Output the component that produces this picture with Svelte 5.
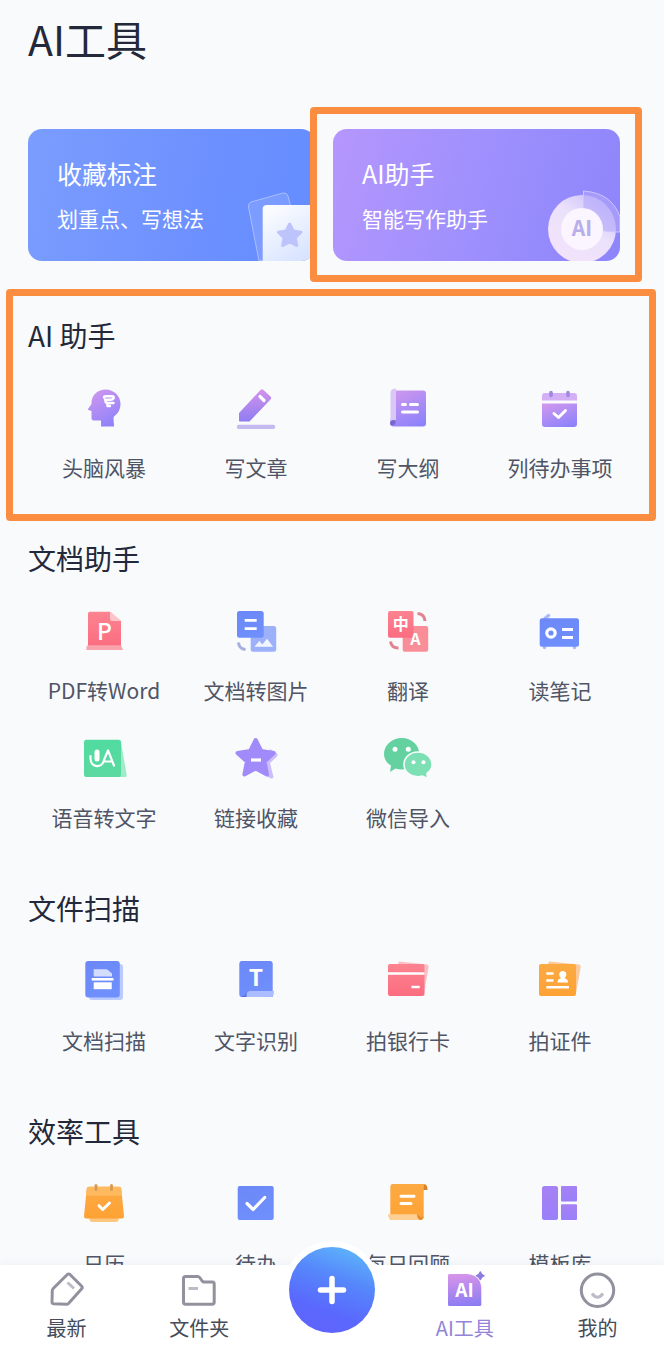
<script>
    let active = $state("ai");

    const sections = [
        {
            title: "AI 助手",
            marked: true,
            tools: [
                { icon: "brain", name: "头脑风暴" },
                { icon: "pencil", name: "写文章" },
                { icon: "outline", name: "写大纲" },
                { icon: "todo-list", name: "列待办事项" }
            ]
        },
        {
            title: "文档助手",
            tools: [
                { icon: "pdf", name: "PDF转Word" },
                { icon: "doc-image", name: "文档转图片" },
                { icon: "translate", name: "翻译" },
                { icon: "radio", name: "读笔记" },
                { icon: "voice", name: "语音转文字" },
                { icon: "star", name: "链接收藏" },
                { icon: "wechat", name: "微信导入" }
            ]
        },
        {
            title: "文件扫描",
            tools: [
                { icon: "scan", name: "文档扫描" },
                { icon: "ocr", name: "文字识别" },
                { icon: "bank-card", name: "拍银行卡" },
                { icon: "id-card", name: "拍证件" }
            ]
        },
        {
            title: "效率工具",
            tools: [
                { icon: "calendar", name: "日历" },
                { icon: "check", name: "待办" },
                { icon: "review", name: "每日回顾" },
                { icon: "template", name: "模板库" }
            ]
        }
    ];

    const tabs = [
        { id: "latest", name: "最新" },
        { id: "folder", name: "文件夹" },
        { id: "add", name: "新建" },
        { id: "ai", name: "AI工具" },
        { id: "me", name: "我的" }
    ];
</script>

{#snippet toolIcon(name)}
    <svg class="icon" viewBox="0 0 48 48" aria-hidden="true">
        {#if name == "brain"}
            <path fill="url(#violet)" d="M11.5 17C12 9.500 18 4.500 25.500 4.500C34 4.500 40.500 11 40.500 19C40.500 24.500 38 28.500 34 31.500L33.500 33L34 41.500H21V35.500H14Q11.500 35.500 11.500 33V26L8.500 25Q7.500 24.500 8.300 23.500L11.500 19Z" />
            <path fill="none" stroke="#fff" stroke-width="2.400" stroke-linecap="round" stroke-linejoin="round" d="M24 12.500Q24 11.300 26 11.300H32Q34.500 11.300 33.500 13.500Q32.500 15 29 14.700H25M33.500 18H28Q25.500 18 25.500 16M27.500 18.500V21H30" />
        {:else if name == "pencil"}
            <path fill="url(#pinkViolet)" d="M7 28L28.500 5Q30 3.500 31.500 5L38.500 11.500Q39.800 13 38.500 14.500L17.500 36.500H8Q7 36.500 7 35.500Z" />
            <path stroke="#fff" stroke-width="3.200" stroke-linecap="round" d="M28 11.500L32 15.500" />
            <rect x="5" y="39.700" width="38" height="4.200" rx="1.500" fill="#c5bbee" />
        {:else if name == "outline"}
            <path fill="url(#violet)" d="M12 5.500H39Q42 5.500 42 8.500V38.500Q42 41.500 39 41.500H9Q6 41 6 38Z" />
            <path fill="#d9c7f8" d="M6.500 7Q7 3.500 12 3.500V35Q7 34.500 6.500 38.500Z" />
            <path fill="#7868cc" d="M6 38Q6.500 34.500 10.500 35.200Q12 35.800 11.500 38Q10.500 40.500 8 40.500Q6 40 6 38Z" />
            <path stroke="#fff" stroke-width="3" stroke-linecap="round" d="M18.500 19.500H21.500M26.500 19.500H33.500M18.500 27H33.500" />
        {:else if name == "todo-list"}
            <path fill="#d3aff5" d="M6 15.500V11Q6 8 9 8H38Q41 8 41 11V15.500Z" />
            <path fill="url(#violet)" d="M6 18.500H41V39Q41 42 38 42H9Q6 42 6 39Z" />
            <path stroke="#a187e2" stroke-width="3.600" stroke-linecap="round" d="M15 7.500V10.500M32 7.500V10.500" />
            <path fill="none" stroke="#fff" stroke-width="3" stroke-linecap="round" stroke-linejoin="round" d="M18 28.500L22.500 32.500L29.500 25.500" />
        {:else if name == "pdf"}
            <path fill="url(#red)" d="M10 3.700H30L41 13V39H8V5.700Q8 3.700 10 3.700Z" />
            <path fill="#fdc4c9" d="M30 3.700L41 13H32Q30 13 30 11Z" />
            <path fill="#f9a4ac" d="M8 37.300H41L43 42H6.300Q6 38 8 37.300Z" />
            <text x="24.500" y="31.500" class="glyph medium" font-size="23">P</text>
        {:else if name == "doc-image"}
            <rect x="18.700" y="18" width="25.500" height="25.700" rx="2.500" fill="#9db0fa" />
            <rect x="5" y="3" width="26.700" height="26.700" rx="2.500" fill="url(#blue)" />
            <path stroke="#fff" stroke-width="2.800" d="M12.700 12.300H24.700M12.700 20.700H24.700" />
            <path fill="#f2f5ff" d="M22.500 38.700L27.300 33L30.300 36.500L35 30.700L41 38.700Z" />
            <path fill="none" stroke="#a5aede" stroke-width="3" d="M6.500 34.500Q7 41 13.500 41.500" />
        {:else if name == "translate"}
            <rect x="18.700" y="18" width="25.500" height="25.700" rx="2" fill="#fa8e98" />
            <rect x="4" y="3" width="25.500" height="26.700" rx="2" fill="url(#red)" />
            <text x="16.700" y="22" class="glyph" font-size="16">中</text>
            <text x="31.500" y="37" class="glyph" font-size="16">A</text>
            <path fill="none" stroke="#e18391" stroke-width="3" d="M33.500 5.500Q40.500 6 41 13M6.500 33.500Q7.500 40 14.500 40" />
        {:else if name == "radio"}
            <path stroke="#a9bbfb" stroke-width="3.500" stroke-linecap="round" d="M9 10.500L12.500 7.500M8.500 38V39.500M38.500 38V39.500" />
            <rect x="3.700" y="10.300" width="39.300" height="28.400" rx="2.500" fill="url(#blue)" />
            <circle cx="15" cy="25" r="4.200" fill="none" stroke="#fff" stroke-width="3.200" />
            <path stroke="#fff" stroke-width="2.800" d="M26 21.500H37M26 29.500H37" />
        {:else if name == "voice"}
            <path fill="#9decc5" d="M38 6L41 7L46.700 40Q47 42 45 42H38Z" />
            <rect x="4" y="4.700" width="37" height="37.300" rx="2.500" fill="url(#green)" />
            <rect x="14.500" y="14.500" width="5" height="12" rx="2.500" fill="#fff" />
            <path fill="none" stroke="#fff" stroke-width="2.200" stroke-linecap="round" stroke-linejoin="round" d="M10.500 21V23C10.500 33.500 22.500 33.500 24 25L28 15.500L34 30.500M24.500 26.500H31.500" />
        {:else if name == "star"}
            <path fill="#cdbefb" d="M38 14L45 18.500Q46.200 20 45 21.500L38 28L41.500 42Q41 44 39 43.500L28 38Z" />
            <path fill="#a18bfa" stroke="#a18bfa" stroke-width="4" stroke-linejoin="round" d="M23.700 5L29.200 16L41.700 18L32.500 26.500L35 39.500L23.700 33.500L12.400 39.500L14.900 26.500L5.500 18L18.200 16Z" />
            <path stroke="#fff" stroke-width="3.200" d="M19 25H29" />
        {:else if name == "wechat"}
            <path fill="#63d2a0" d="M17.700 3C27.500 3 35.300 10 35.300 19C35.300 28 27.500 34.500 17.700 34.500Q14.500 34.500 11.500 33.500L6 37L7 30.500C2.500 28 0 24 0 19C0 10 8 3 17.700 3Z" />
            <path fill="#7ce0b4" stroke="#f9fafc" stroke-width="1.600" d="M34 17C42 17 48 22.500 48 29.500Q48 35 43 38.500L43.500 43.500L38.500 41Q36.500 41.700 34 41.700C26 41.700 20 36.500 20 29.500C20 22.500 26 17 34 17Z" />
            <g fill="#fff">
                <circle cx="11" cy="14.300" r="2.500" />
                <circle cx="24.300" cy="14.300" r="2.500" />
                <circle cx="29.500" cy="27.300" r="2" />
                <circle cx="39.500" cy="27.300" r="2" />
            </g>
        {:else if name == "scan"}
            <rect x="9" y="6" width="34" height="36" rx="3" fill="#bccbff" />
            <rect x="5.300" y="3" width="34.500" height="36.500" rx="3" fill="url(#blue)" />
            <path fill="#d3deff" d="M13.700 11.300H27L32 15.500V18.500H13.700Z" />
            <path stroke="#fff" stroke-width="2.600" d="M11.700 21.300H33.500" />
            <path fill="#fff" d="M13.700 24.300H31.700V31.200H13.700Z" />
        {:else if name == "ocr"}
            <path fill="url(#blue)" d="M10 3H38Q40.700 3 40.700 6V39H10Q7.300 39 7.300 36V6Q7.300 3 10 3Z" />
            <path fill="#abbcff" d="M14 39Q14.500 33 18 33H42Q42 39 38.500 39Z" />
            <path fill="#5872e2" d="M8.500 38.500Q14 38 14.500 34.500V39H10Z" />
            <text x="24" y="28" class="glyph" font-size="23">T</text>
        {:else if name == "bank-card"}
            <path fill="#fbc0c7" d="M15 3.500L43 6.500Q45 7 44.700 9L40 35H36L14 6Z" />
            <rect x="4" y="6" width="36.500" height="32" rx="2" fill="url(#red)" />
            <path stroke="#fff" stroke-width="2.600" d="M4 15.500H40.500M27.500 29H35.700" />
        {:else if name == "id-card"}
            <path fill="#fcc99b" d="M13 3.500L43 6.500Q45 7 44.700 9L40 35H36L12 6Z" />
            <rect x="3" y="6" width="37" height="32" rx="2" fill="url(#orange)" />
            <path stroke="#fff" stroke-width="2.600" d="M10.300 15.500H17.500M10.300 22.500H17.500M10.300 29.300H33" />
            <circle cx="26.800" cy="16.500" r="3.500" fill="#fff" />
            <path fill="#fff" d="M25 18H28.600L29 20.500Q32 21 32 24.500H21.500Q21.500 21 24.600 20.500Z" />
        {:else if name == "calendar"}
            <path fill="#fec77f" d="M8 35H40L38 40Q37.500 41 36 41H12Q10.500 41 10 40Z" />
            <path fill="url(#orange)" d="M9 5.700H39Q41 5.700 41.300 8L44 35Q44 37.500 42 37.500H6Q4 37.500 4 35L6.700 8Q7 5.700 9 5.700Z" />
            <path fill="#ffb95e" d="M9 5.700H39Q41 5.700 41.300 8L42 14.700H6L6.700 8Q7 5.700 9 5.700Z" />
            <path stroke="#d99b50" stroke-width="3" stroke-linecap="round" d="M16 4.500V8.500M31.500 4.500V8.500" />
            <path fill="none" stroke="#fff" stroke-width="3" stroke-linecap="round" stroke-linejoin="round" d="M19 24.700L22.700 28.500L29.500 22" />
        {:else if name == "check"}
            <rect x="5.700" y="5" width="36" height="34" rx="2" fill="url(#blue)" />
            <path fill="none" stroke="#fff" stroke-width="3.200" stroke-linecap="round" stroke-linejoin="round" d="M15 22.500L21.200 28.500L32.700 16.500" />
        {:else if name == "review"}
            <path fill="#d9812f" d="M38 3H40Q43.500 3 43.500 9H38Z" />
            <path fill="url(#orange)" d="M9 3H41Q39.700 4 39.700 7V36Q39.700 39 36 39H6.300V6Q6.300 3 9 3Z" />
            <path fill="#fdcf94" d="M4 33.300H33Q33 38 36 39H7.500Q4 38 4 33.300Z" />
            <path fill="#e2882d" d="M33 33.500Q34 38 36.500 39Q39.500 38.500 39.500 35L38 37Z" />
            <path stroke="#fff" stroke-width="3" stroke-linecap="round" d="M17 15.200H30M17 22.500H27" />
        {:else if name == "template"}
            <g fill="url(#purple)">
                <rect x="6" y="5" width="16" height="34" rx="2.500" />
                <rect x="25" y="5" width="16" height="15.500" rx="1" />
                <rect x="25" y="23.300" width="16" height="15.700" rx="1" />
            </g>
        {/if}
    </svg>
{/snippet}

{#snippet tabIcon(id)}
    <svg class="tab-icon" viewBox="0 0 40 40" aria-hidden="true">
        {#if id == "latest"}
            <path class="line" d="M21.300 4.500Q22.700 3.500 24 4.500L35.700 16.200Q36.800 17.500 35.700 18.700L22.500 33.500Q21.700 34.300 20.500 34.300L7.500 33.700Q6 33.500 6 32L6.300 20.500Q6.300 19.300 7.200 18.500Z" />
            <path stroke="#bcbcc9" stroke-width="3" d="M21.500 12.500L28 18.500" />
        {:else if id == "folder"}
            <path class="line" d="M6.500 6.500H18.500Q20 6.500 20.700 7.500L23.200 11Q24 12 25 12H33.500Q35.200 12 35.200 14V32Q35.200 34.300 33 34.300H6.500Q4.500 34.300 4.500 32V8.500Q4.500 6.500 6.500 6.500Z" />
            <path stroke="#bcbcc9" stroke-width="3" d="M9.500 18.500H19" />
        {:else if id == "ai"}
            <path fill="url(#pinkViolet)" d="M4.500 4H22Q36.300 5.500 36.300 19V34.500Q36.300 36 34.800 36H4.500Q3 36 3 34.500V5.500Q3 4 4.500 4Z" />
            <path fill="#8d7be0" stroke="#8d7be0" stroke-width="1.500" stroke-linejoin="round" d="M35.300 2Q36 5 39 5.700Q36 6.500 35.300 9.500Q34.500 6.500 31.500 5.700Q34.500 5 35.300 2Z" />
            <text x="19.500" y="27" class="glyph" font-size="19">AI</text>
        {:else if id == "me"}
            <circle class="line" cx="19.500" cy="20.300" r="16.200" />
            <path fill="none" stroke="#bcbcc9" stroke-width="3" d="M14 23.500Q19.500 31 25 23.500" />
        {/if}
    </svg>
{/snippet}

<svg class="defs" aria-hidden="true">
    <defs>
        <linearGradient id="violet" x1="0.200" y1="0" x2="0.700" y2="1">
            <stop offset="0" stop-color="#ce97ee" />
            <stop offset="1" stop-color="#8e82fb" />
        </linearGradient>
        <linearGradient id="pinkViolet" x1="0.400" y1="0" x2="0.500" y2="1">
            <stop offset="0" stop-color="#d694ea" />
            <stop offset="1" stop-color="#8c7cf2" />
        </linearGradient>
        <linearGradient id="red" x1="0" y1="0" x2="0" y2="1">
            <stop offset="0" stop-color="#fc8390" />
            <stop offset="1" stop-color="#fb6d80" />
        </linearGradient>
        <linearGradient id="blue" x1="0" y1="0" x2="0.300" y2="1">
            <stop offset="0" stop-color="#6b88f6" />
            <stop offset="1" stop-color="#6f8ffd" />
        </linearGradient>
        <linearGradient id="green" x1="0" y1="0" x2="0" y2="1">
            <stop offset="0" stop-color="#50dba0" />
            <stop offset="1" stop-color="#5bd9a0" />
        </linearGradient>
        <linearGradient id="orange" x1="0" y1="0" x2="0" y2="1">
            <stop offset="0" stop-color="#fcaa43" />
            <stop offset="1" stop-color="#fea235" />
        </linearGradient>
        <linearGradient id="purple" x1="0" y1="0" x2="0" y2="1">
            <stop offset="0" stop-color="#a681f3" />
            <stop offset="1" stop-color="#9a7ffa" />
        </linearGradient>
        <linearGradient id="paper" x1="0" y1="0" x2="0.600" y2="1">
            <stop offset="0" stop-color="#ffffff" />
            <stop offset="1" stop-color="#d9e4ff" />
        </linearGradient>
        <linearGradient id="ring" x1="0.300" y1="1" x2="0.900" y2="0.200">
            <stop offset="0" stop-color="#f3e3fb" />
            <stop offset="0.600" stop-color="#ebe1fb" />
            <stop offset="1" stop-color="#cfc5fb" />
        </linearGradient>
    </defs>
</svg>

<div class="app">
    <main>
        <h1>AI工具</h1>

        <div class="cards">
            <a class="card notes" href="#notes">
                <strong>收藏标注</strong>
                <span>划重点、写想法</span>
                <svg class="art" viewBox="0 0 80 80" aria-hidden="true">
                    <path fill="#8fa9ff" fill-opacity="0.500" stroke="#a9beff" stroke-width="1" d="M16 21L48 12Q52 11.500 53 15L67 70L24 80L13.500 26Q13 22 16 21Z" />
                    <path fill="url(#paper)" d="M27.700 28Q27.700 24 32 24H80V80H27.700Z" />
                    <path fill="#bcc4fb" stroke="#bcc4fb" stroke-width="3" stroke-linejoin="round" d="M54.700 43L58.200 50L66 51.200L60.300 56.700L61.700 64.500L54.700 60.800L47.700 64.500L49.100 56.700L43.400 51.200L51.200 50Z" />
                </svg>
            </a>
            <a class="card assistant" href="#assistant">
                <strong>AI助手</strong>
                <span>智能写作助手</span>
                <svg class="art" viewBox="0 0 80 80" aria-hidden="true">
                    <circle cx="42" cy="48" r="34" fill="url(#ring)" />
                    <path fill="#b4a8fa" fill-opacity="0.600" stroke="#cdc4fd" stroke-width="1" d="M43.500 48V10Q72 12 80 36V51H76Z" />
                    <circle cx="42" cy="48" r="21" fill="#faf5fe" />
                    <text x="42" y="55" class="glyph soft" font-size="21">AI</text>
                </svg>
            </a>
        </div>

        {#each sections as section}
            <section class:marked={section.marked}>
                <h2>{section.title}</h2>
                <div class="tools">
                    {#each section.tools as tool}
                        <button class="tool" type="button">
                            {@render toolIcon(tool.icon)}
                            <span>{tool.name}</span>
                        </button>
                    {/each}
                </div>
            </section>
        {/each}
    </main>

    <nav>
        {#each tabs as tab}
            {#if tab.id == "add"}
                <div class="tab">
                    <button class="add" type="button" aria-label={tab.name}>
                        <svg viewBox="0 0 40 40" aria-hidden="true">
                            <path stroke="#fff" stroke-width="5.500" stroke-linecap="round" d="M20 8.500V31.500M8.500 20H31.500" />
                        </svg>
                    </button>
                </div>
            {:else}
                <a class="tab" class:active={active == tab.id} href="#{tab.id}" onclick={() => active = tab.id}>
                    {@render tabIcon(tab.id)}
                    <span>{tab.name}</span>
                </a>
            {/if}
        {/each}
    </nav>
</div>

<style>
    :global(body) {
        background: #f9fafc;
        font-family: "Noto Sans CJK SC", sans-serif;
    }
    .defs {
        position: absolute;
        width: 0;
        height: 0;
    }
    .app {
        display: flex;
        flex-direction: column;
        height: 100vh;
        color: #23283a;
    }
    main {
        flex: 1;
        min-height: 0;
        overflow-x: hidden;
        overflow-y: auto;
        scrollbar-width: none;
        box-sizing: border-box;
        padding: 10px 28px 28px;
    }
    h1 {
        margin: 0;
        font-size: 41px;
        line-height: 56px;
        font-weight: 400;
    }
    .cards {
        display: grid;
        grid-template-columns: 1fr 1fr;
        gap: 18px;
        margin: 63px 16px 0 0;
    }
    .card {
        position: relative;
        display: flex;
        flex-direction: column;
        gap: 12px;
        box-sizing: border-box;
        height: 132px;
        padding: 26px 29px;
        border-radius: 14px;
        color: #fff;
        text-decoration: none;
    }
    .card strong {
        font-size: 25px;
        line-height: 36px;
        font-weight: 400;
    }
    .card span {
        font-size: 21px;
        line-height: 30px;
    }
    .notes {
        background: linear-gradient(100deg, #7b9dfe, #6d90ff 60%, #648dff);
    }
    .assistant {
        background: linear-gradient(105deg, #b596fd, #9e90fd 50%, #8d85fb);
    }
    .art {
        position: absolute;
        right: 0;
        bottom: 0;
        width: 80px;
        height: 80px;
        border-bottom-right-radius: 14px;
    }

    /* orange call-out frames */
    .assistant::after,
    .marked::after {
        content: "";
        position: absolute;
        border: 7px solid #fb8d40;
        border-radius: 4px;
        pointer-events: none;
    }
    .assistant::after {
        inset: -22px -22px -21px -23px;
    }
    .marked::after {
        inset: -26px -20px -40px -22px;
    }

    section {
        position: relative;
        margin-top: 54px;
    }
    section + section {
        margin-top: 57px;
    }
    h2 {
        margin: 0 0 30px;
        font-size: 28px;
        line-height: 40px;
        font-weight: 400;
    }
    .tools {
        display: grid;
        grid-template-columns: repeat(4, 1fr);
        row-gap: 31px;
    }
    .tool {
        display: flex;
        flex-direction: column;
        align-items: center;
        gap: 20px;
        padding: 0;
        border: none;
        background: none;
        color: #4f5566;
        font-family: inherit;
        font-size: 21px;
        line-height: 28px;
        white-space: nowrap;
        cursor: pointer;
    }
    .icon {
        width: 48px;
        height: 48px;
    }
    .glyph {
        fill: #fff;
        font-family: "Noto Sans CJK SC", sans-serif;
        font-weight: 700;
        text-anchor: middle;
    }
    .medium {
        font-weight: 500;
    }
    .soft {
        fill: #b8aeea;
    }

    nav {
        position: relative;
        display: grid;
        grid-template-columns: repeat(5, 1fr);
        padding: 5px 0 27px;
        background: #fff;
        box-shadow: 0 -2px 8px rgba(60, 70, 110, 0.05);
    }
    .tab {
        position: relative;
        display: flex;
        flex-direction: column;
        align-items: center;
        gap: 4px;
        color: #464b58;
        font-size: 20px;
        line-height: 28px;
        text-decoration: none;
    }
    .active {
        color: #9384d8;
    }
    .tab-icon {
        width: 40px;
        height: 40px;
    }
    .line {
        fill: none;
        stroke: #92929f;
        stroke-width: 3;
        stroke-linejoin: round;
    }
    .add {
        position: absolute;
        top: -23px;
        display: flex;
        align-items: center;
        justify-content: center;
        width: 86px;
        height: 86px;
        padding: 0;
        border: none;
        border-radius: 50%;
        background: linear-gradient(200deg, #5fc0fb, #5687fb 38%, #5a68fd 70%, #6262ff);
        box-shadow: 0 0 0 6px #fff;
        cursor: pointer;
    }
    .add svg {
        width: 40px;
        height: 40px;
    }
</style>
